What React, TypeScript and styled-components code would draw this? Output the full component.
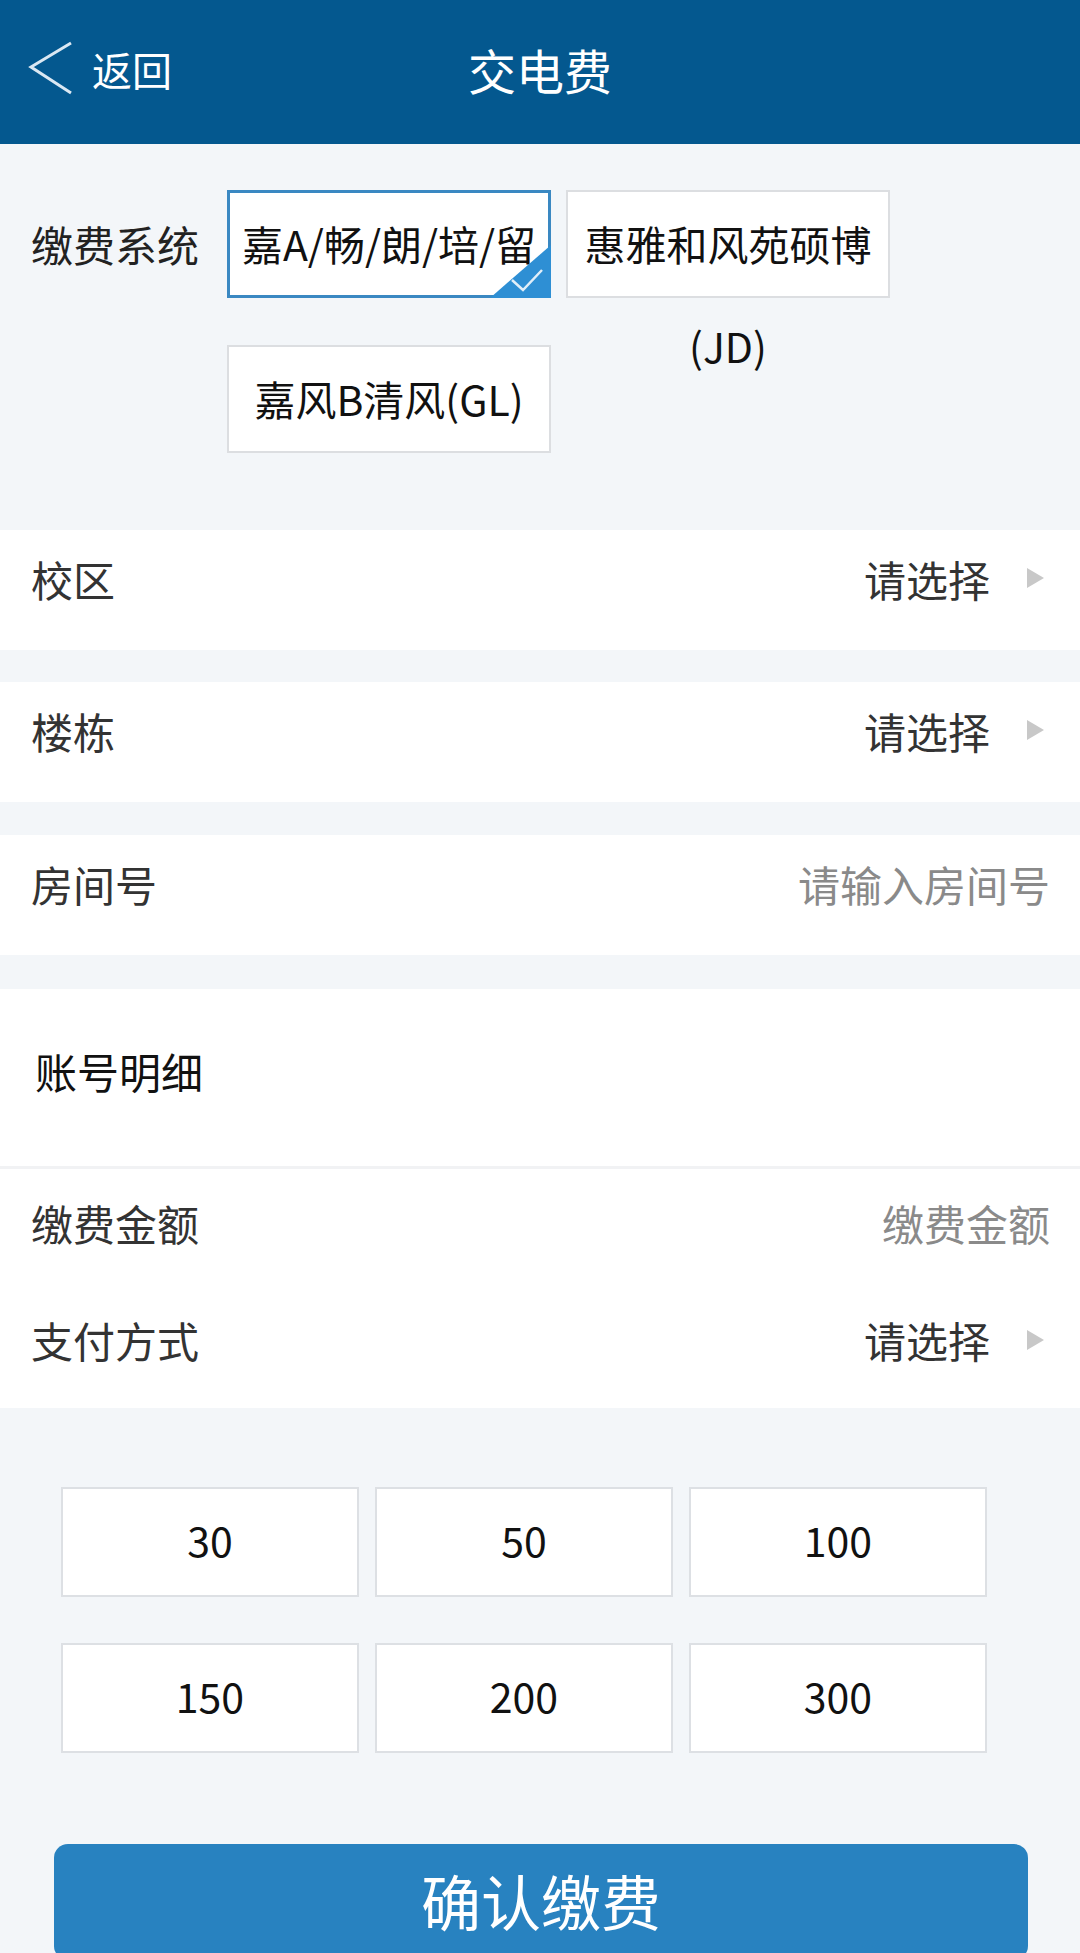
import styled, { createGlobalStyle } from 'styled-components';

const GlobalStyle = createGlobalStyle`
  html, body {
    margin: 0;
    padding: 0;
    background: #f3f6f9;
  }
  body {
    font-family: "Noto Sans CJK SC", "Noto Sans", sans-serif;
    color: #333;
  }
  * {
    box-sizing: border-box;
  }
`;

const Page = styled.div`
  width: 1080px;
  min-height: 1953px;
  background: #f3f6f9;
`;

const Header = styled.header`
  height: 144px;
  background: #04588f;
  display: grid;
  grid-template-columns: 1fr auto 1fr;
  align-items: center;
  padding-bottom: 6px;
  color: #fff;
`;

const Back = styled.div`
  display: flex;
  align-items: center;
  gap: 18px;
  padding-left: 28px;
  font-size: 40px;
  line-height: 1;

  svg {
    width: 46px;
    height: 56px;
    flex-shrink: 0;
  }
`;

const Title = styled.h1`
  margin: 0;
  font-size: 48px;
  font-weight: 400;
  line-height: 1;
`;

const SystemSection = styled.section`
  display: flex;
  padding: 46px 0 77px 31px;
`;

const FieldLabel = styled.div`
  width: 196px;
  flex-shrink: 0;
  font-size: 42px;
  line-height: 108px;
  color: #222;
`;

const Options = styled.div`
  display: flex;
  flex-wrap: wrap;
  gap: 47px 15px;
  flex: 1;
`;

const Option = styled.div<{ $selected?: boolean }>`
  position: relative;
  width: 324px;
  height: 108px;
  padding: 0 6px;
  background: #fff;
  border: ${(p) => (p.$selected ? '3px solid #3a88c2' : '2px solid #dcdee1')};
  font-size: 41px;
  line-height: ${(p) => (p.$selected ? '100px' : '102px')};
  text-align: center;
  color: #111;
`;

const CheckCorner = styled.svg`
  position: absolute;
  right: -3px;
  bottom: -3px;
  width: 61px;
  height: 53px;
`;

const Row = styled.div<{ $height?: number; $gap?: number; $lift?: number }>`
  height: ${(p) => p.$height ?? 120}px;
  margin-bottom: ${(p) => p.$gap ?? 0}px;
  display: flex;
  align-items: center;
  justify-content: space-between;
  padding: 0 30px ${(p) => p.$lift ?? 0}px 31px;
  background: #fff;
  font-size: 42px;
  color: #333;
`;

const Value = styled.div<{ $placeholder?: boolean }>`
  display: flex;
  align-items: center;
  gap: 37px;
  color: ${(p) => (p.$placeholder ? '#8a8a8a' : '#333')};
`;

const Arrow = styled.span`
  width: 0;
  height: 0;
  margin-right: 6px;
  border-left: 17px solid #c8c8c8;
  border-top: 10.5px solid transparent;
  border-bottom: 10.5px solid transparent;
`;

const AccountTitle = styled.div`
  height: 180px;
  display: flex;
  align-items: center;
  padding: 0 0 14px 35px;
  background: #fff;
  border-bottom: 3px solid #f1f2f4;
  font-size: 42px;
  color: #111;
`;

const PayCard = styled.div`
  background: #fff;
  padding-bottom: 9px;
`;

const AmountGrid = styled.div`
  display: grid;
  grid-template-columns: repeat(3, 298px);
  gap: 46px 16px;
  padding: 79px 0 0 61px;
`;

const Amount = styled.div`
  height: 110px;
  display: flex;
  align-items: center;
  justify-content: center;
  padding-bottom: 6px;
  background: #fff;
  border: 2px solid #dde0e4;
  font-size: 41px;
  color: #111;
`;

const Confirm = styled.button`
  display: flex;
  align-items: center;
  justify-content: center;
  width: 974px;
  height: 116px;
  margin: 91px 0 0 54px;
  padding: 0 0 6px;
  border: none;
  border-radius: 14px;
  background: #2882c0;
  color: #fff;
  font-family: inherit;
  font-size: 60px;
`;

const systems = ['嘉A/畅/朗/培/留', '惠雅和风苑硕博(JD)', '嘉风B清风(GL)'];
const amounts = [30, 50, 100, 150, 200, 300];

export default function App() {
  return (
    <Page>
      <GlobalStyle />
      <Header>
        <Back>
          <svg viewBox="0 0 46 56" fill="none">
            <polyline points="43,2 3,26 43,52" stroke="#dbe8f3" strokeWidth="3" />
          </svg>
          返回
        </Back>
        <Title>交电费</Title>
        <div />
      </Header>

      <SystemSection>
        <FieldLabel>缴费系统</FieldLabel>
        <Options>
          {systems.map((s, i) => (
            <Option key={s} $selected={i === 0}>
              {s}
              {i === 0 && (
                <CheckCorner viewBox="0 0 61 53">
                  <polygon points="61,0 61,53 0,53" fill="#2e8fd4" />
                  <polyline
                    points="22,35 33,45 52,25"
                    fill="none"
                    stroke="#fff"
                    strokeOpacity="0.85"
                    strokeWidth="2.5"
                  />
                </CheckCorner>
              )}
            </Option>
          ))}
        </Options>
      </SystemSection>

      <Row $gap={32} $lift={24}>
        校区
        <Value>
          请选择
          <Arrow />
        </Value>
      </Row>
      <Row $gap={33} $lift={24}>
        楼栋
        <Value>
          请选择
          <Arrow />
        </Value>
      </Row>
      <Row $gap={34} $lift={24}>
        房间号
        <Value $placeholder>请输入房间号</Value>
      </Row>

      <AccountTitle>账号明细</AccountTitle>
      <PayCard>
        <Row $height={115} $lift={8}>
          缴费金额
          <Value $placeholder>缴费金额</Value>
        </Row>
        <Row $height={115} $lift={4}>
          支付方式
          <Value>
            请选择
            <Arrow />
          </Value>
        </Row>
      </PayCard>

      <AmountGrid>
        {amounts.map((a) => (
          <Amount key={a}>{a}</Amount>
        ))}
      </AmountGrid>

      <Confirm>确认缴费</Confirm>
    </Page>
  );
}
